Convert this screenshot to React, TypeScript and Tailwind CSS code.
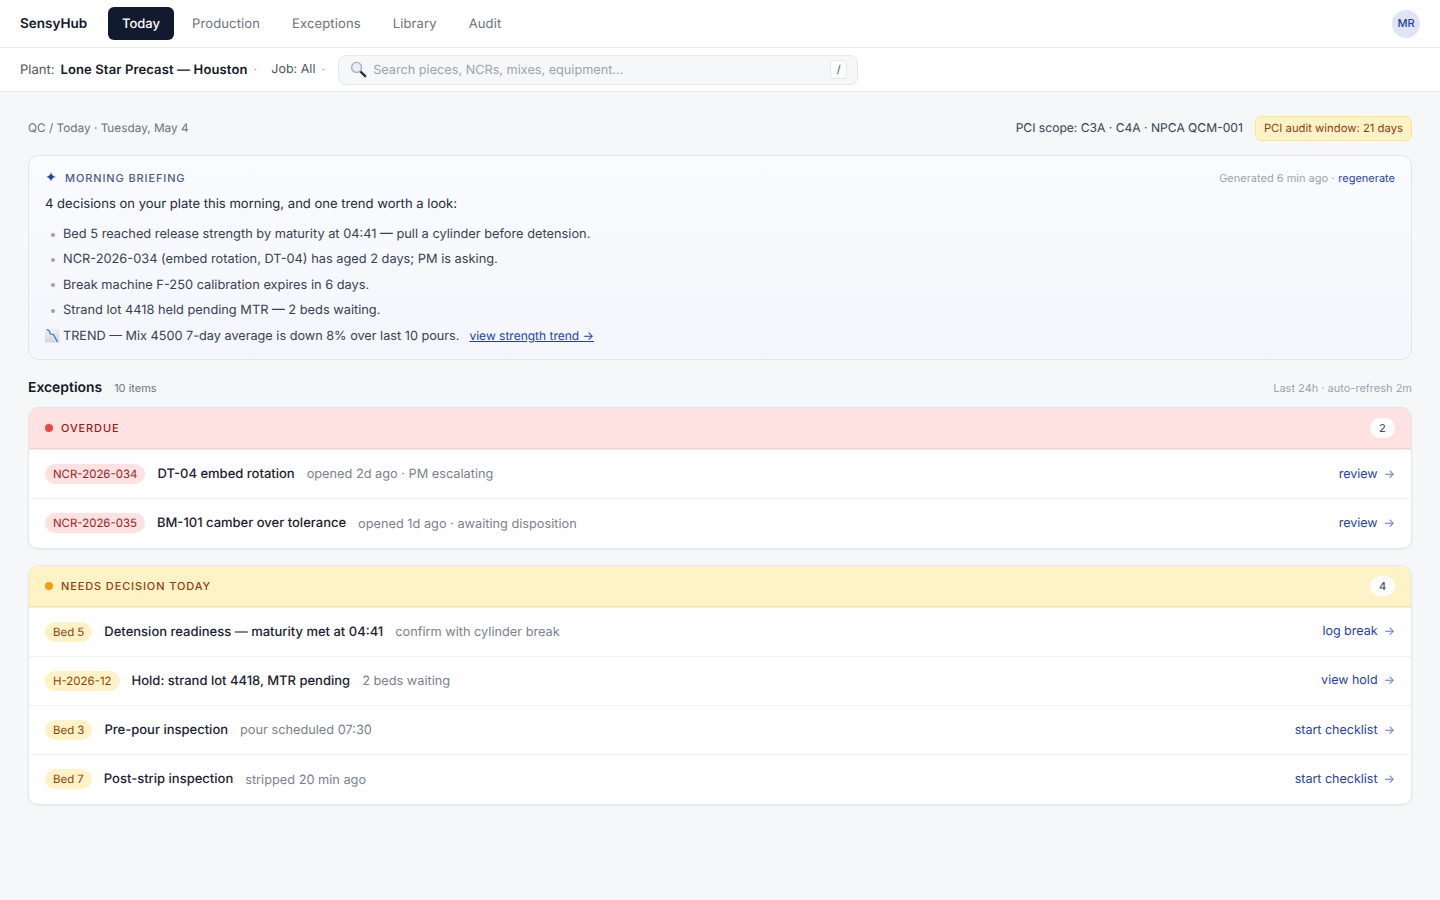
const navItems = ["Today", "Production", "Exceptions", "Library", "Audit"];

const briefingItems = [
  "Bed 5 reached release strength by maturity at 04:41 — pull a cylinder before detension.",
  "NCR-2026-034 (embed rotation, DT-04) has aged 2 days; PM is asking.",
  "Break machine F-250 calibration expires in 6 days.",
  "Strand lot 4418 held pending MTR — 2 beds waiting.",
];

const overdueRows = [
  { tag: "NCR-2026-034", title: "DT-04 embed rotation", meta: "opened 2d ago · PM escalating", action: "review" },
  { tag: "NCR-2026-035", title: "BM-101 camber over tolerance", meta: "opened 1d ago · awaiting disposition", action: "review" },
];

const decisionRows = [
  { tag: "Bed 5", title: "Detension readiness — maturity met at 04:41", meta: "confirm with cylinder break", action: "log break" },
  { tag: "H-2026-12", title: "Hold: strand lot 4418, MTR pending", meta: "2 beds waiting", action: "view hold" },
  { tag: "Bed 3", title: "Pre-pour inspection", meta: "pour scheduled 07:30", action: "start checklist" },
  { tag: "Bed 7", title: "Post-strip inspection", meta: "stripped 20 min ago", action: "start checklist" },
];

type Row = { tag: string; title: string; meta: string; action: string };

function SearchGlyph() {
  return (
    <svg width="17" height="17" viewBox="0 0 17 17" className="shrink-0">
      <path d="M10.5 10.5 15.2 15.2" stroke="#27303d" strokeWidth="2.4" strokeLinecap="round" />
      <circle cx="6.6" cy="6.4" r="5" fill="#e6edf5" stroke="#a3abb6" strokeWidth="1.3" />
    </svg>
  );
}

function TrendGlyph() {
  return (
    <svg width="15" height="15" viewBox="0 0 15 15" className="shrink-0">
      <defs>
        <linearGradient id="trendbg" x1="0" y1="0" x2="0" y2="1">
          <stop offset="0" stopColor="#eef1f4" />
          <stop offset="1" stopColor="#cfd6dd" />
        </linearGradient>
      </defs>
      <rect x="0" y="0.5" width="14.5" height="14" fill="url(#trendbg)" />
      <path d="M1.5 1.5 4 2.5 5.5 6 8.5 6.5 12.5 14" fill="none" stroke="#2f73b8" strokeWidth="1.2" />
    </svg>
  );
}

function ExceptionRow({ row, tagClass }: { row: Row; tagClass: string }) {
  return (
    <div className="flex h-[49.25px] items-center gap-3 border-t border-[#f0f1f4] px-4 first:border-t-0">
      <span className={`rounded-full px-2 py-[2px] text-[11.45px] leading-[16px] ${tagClass}`}>{row.tag}</span>
      <span className="pt-[1.6px] text-[13px] font-medium text-[#1a2130]">{row.title}</span>
      <span className="pt-[1.6px] text-[12.75px] text-[#7b8190]">{row.meta}</span>
      <span className="ml-auto pt-[1.6px] text-[12.5px] text-[#1e40af]">{row.action}</span>
      <span className="ml-[-6px] pb-[1px] text-[12px] leading-none text-[#6b80d6]">→</span>
    </div>
  );
}

function ExceptionCard(props: {
  label: string;
  count: number;
  rows: Row[];
  headClass: string;
  dotClass: string;
  labelClass: string;
  tagClass: string;
}) {
  return (
    <section className="overflow-hidden rounded-[10px] border border-[#e5e7eb] bg-white shadow-[0_1px_2px_rgba(16,24,40,0.05)]">
      <div className={`flex h-[41px] items-center border-b px-4 ${props.headClass}`}>
        <span className={`mr-2 h-2 w-2 rounded-full ${props.dotClass}`} />
        <span className={`pt-[1px] text-[11px] font-medium tracking-[0.08em] ${props.labelClass}`}>{props.label}</span>
        <span className="ml-auto flex h-5 w-[25px] items-center justify-center rounded-full bg-white pt-[1px] text-[11px] font-medium text-[#4b5563]">
          {props.count}
        </span>
      </div>
      {props.rows.map((row) => (
        <ExceptionRow key={row.tag} row={row} tagClass={props.tagClass} />
      ))}
    </section>
  );
}

export default function App() {
  return (
    <div className="min-h-screen bg-[#f6f7f9] font-['Inter',sans-serif] text-[13px] text-[#1a2130] antialiased [text-rendering:geometricPrecision]">
      <header className="flex h-12 items-center border-b border-[#e5e7eb] bg-white px-5">
        <span className="mr-5 w-[68px] pt-[2px] text-[13.5px] font-semibold text-[#111827]">SensyHub</span>
        <nav className="flex items-center gap-1">
          {navItems.map((item, i) => (
            <span
              key={item}
              className={`flex h-[33px] items-center rounded-md px-[14px] pt-[2px] text-[13px] ${
                i === 0 ? "bg-[#111a2e] font-medium text-white" : "tracking-[0.01em] text-[#6b7280]"
              }`}
            >
              {item}
            </span>
          ))}
        </nav>
        <span className="ml-auto flex h-7 w-7 items-center justify-center rounded-full bg-[#dfe5f3] text-[11px] font-medium text-[#1e40af]">
          MR
        </span>
      </header>

      <div className="flex h-11 items-center border-b border-[#e5e7eb] bg-white px-5">
        <span className="pt-[2px] text-[#4b5563]">Plant:</span>
        <span className="ml-[6px] pt-[2px] font-semibold tracking-[0.01em] text-[#111827]">Lone Star Precast — Houston</span>
        <span className="ml-[6px] pt-[2px] text-[#9ca3af]">·</span>
        <span className="ml-[14px] pt-[2px] text-[12.5px] text-[#4b5563]">Job: All</span>
        <span className="ml-[6px] pt-[2px] text-[#9ca3af]">·</span>
        <div className="ml-[13px] flex h-[30px] w-[520px] items-center rounded-lg border border-[#e5e7eb] bg-[#f6f7f9] pl-[11px] pr-[10px]">
          <SearchGlyph />
          <span className="ml-[6px] pt-[2px] text-[12.7px] text-[#9ca3af]">Search pieces, NCRs, mixes, equipment…</span>
          <span className="ml-auto flex h-[19px] w-[17px] items-center justify-center rounded border border-[#e5e7eb] bg-white text-[11px] text-[#4b5563]">
            /
          </span>
        </div>
      </div>

      <main className="px-7 pt-6">
        <div className="flex h-6 items-center justify-between">
          <span className="pt-[2px] text-[11.8px] text-[#6b7280]">QC / Today · Tuesday, May 4</span>
          <div className="flex items-center gap-3">
            <span className="text-[12.1px] text-[#374151]">PCI scope: C3A · C4A · NPCA QCM-001</span>
            <span className="flex h-[25px] items-center rounded-md border border-[#fde68a] bg-[#fef3c7] px-2 pt-[1px] text-[11.3px] text-[#92400e]">
              PCI audit window: 21 days
            </span>
          </div>
        </div>

        <section className="mt-[15px] h-[205px] rounded-[10px] border border-[#e0e4f0] bg-gradient-to-b from-[#fafbff] to-[#f4f6fb] px-4 pt-[14px]">
          <div className="flex h-4 items-center">
            <span className="w-5 text-[14px] leading-none text-[#1e40af]">✦</span>
            <span className="text-[11px] font-medium tracking-[0.08em] text-[#4a5a8a]">MORNING BRIEFING</span>
            <span className="ml-auto text-[11px] text-[#9ca3af]">Generated 6 min ago ·</span>
            <span className="ml-1 text-[11px] text-[#1e40af]">regenerate</span>
          </div>
          <p className="mt-[8px] h-5 text-[13.05px] leading-5 text-[#1f2937]">4 decisions on your plate this morning, and one trend worth a look:</p>
          <ul className="mt-[8px]">
            {briefingItems.map((item) => (
              <li key={item} className="flex h-[25.4px] items-center text-[12.8px] text-[#374151]">
                <span className="ml-[6px] mr-[8px] h-1 w-1 rounded-full bg-[#9ca3af]" />
                {item}
              </li>
            ))}
          </ul>
          <div className="flex h-[25px] items-center text-[12.7px] text-[#374151]">
            <span className="pb-[2px]">
              <TrendGlyph />
            </span>
            <span className="ml-[3px] pt-[1px]">TREND — Mix 4500 7-day average is down 8% over last 10 pours.</span>
            <span className="ml-[10px] pb-[1px] text-xs text-[#1e40af] underline">view strength trend →</span>
          </div>
        </section>

        <div className="mb-[10px] mt-[17px] flex h-5 items-center">
          <h2 className="pt-[2px] text-[13.9px] font-semibold text-[#111827]">Exceptions</h2>
          <span className="ml-3 pt-[2px] text-[11px] text-[#6b7280]">10 items</span>
          <span className="ml-auto pt-[2px] text-[11px] text-[#9ca3af]">Last 24h · auto-refresh 2m</span>
        </div>

        <div className="flex flex-col gap-4">
          <ExceptionCard
            label="OVERDUE"
            count={2}
            rows={overdueRows}
            headClass="border-[#fecaca] bg-[#fee2e2]"
            dotClass="bg-[#ef4444]"
            labelClass="text-[#991b1b]"
            tagClass="bg-[#fee2e2] text-[#991b1b]"
          />
          <ExceptionCard
            label="NEEDS DECISION TODAY"
            count={4}
            rows={decisionRows}
            headClass="border-[#fde68a] bg-[#fef3c7]"
            dotClass="bg-[#f59e0b]"
            labelClass="text-[#92400e]"
            tagClass="bg-[#fef3c7] text-[#92400e]"
          />
        </div>
      </main>
    </div>
  );
}
